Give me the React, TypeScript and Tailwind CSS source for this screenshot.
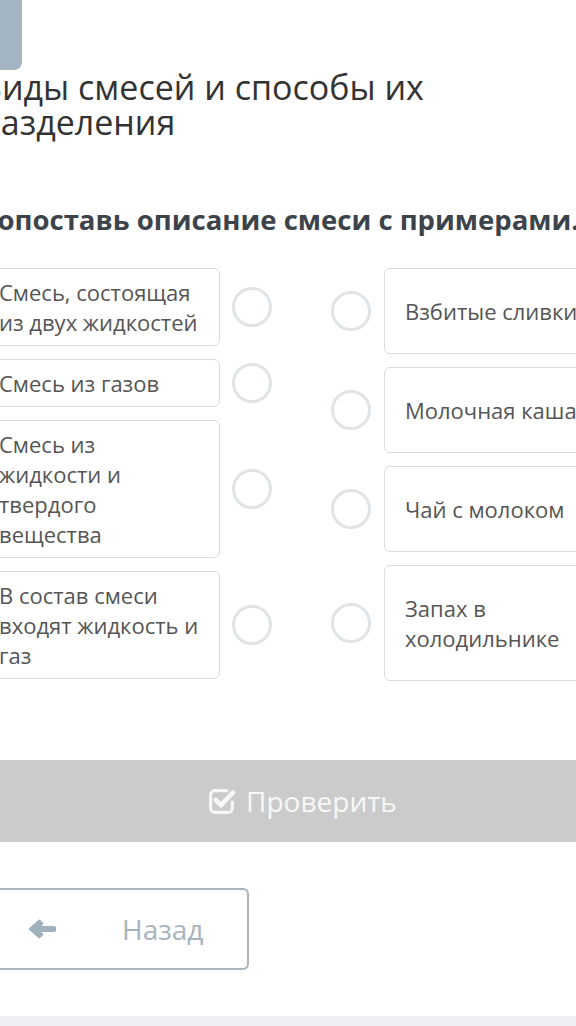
const leftItems = [
  "Смесь, состоящая\nиз двух жидкостей",
  "Смесь из газов",
  "Смесь из\nжидкости и\nтвердого\nвещества",
  "В состав смеси\nвходят жидкость и\nгаз",
];

const rightItems = ["Взбитые сливки", "Молочная каша", "Чай с молоком", "Запах в\nхолодильнике"];

function Dot() {
  return <span className="size-10 shrink-0 rounded-full border-[3px] border-[#e1e4e6] bg-white" />;
}

function CheckIcon() {
  return (
    <svg viewBox="0 0 28 28" className="size-[29px]" fill="none">
      <path
        d="M19 3.5H7.5a4 4 0 0 0-4 4v13a4 4 0 0 0 4 4h13a4 4 0 0 0 4-4v-6"
        stroke="currentColor"
        strokeWidth="3"
        strokeLinecap="round"
      />
      <path
        d="M8.5 12.5l5 5L25 5.5"
        stroke="currentColor"
        strokeWidth="4.6"
        strokeLinecap="round"
        strokeLinejoin="round"
      />
    </svg>
  );
}

function ArrowIcon() {
  return (
    <svg viewBox="0 0 26 18" className="h-[20px] w-[28px]" fill="currentColor">
      <path
        d="M10.5 1L1.5 9l9 8 3-3-3-3H23.5a2 2 0 0 0 0-4H10.5l3-3z"
        stroke="currentColor"
        strokeWidth="1.6"
        strokeLinejoin="round"
      />
    </svg>
  );
}

export default function App() {
  return (
    <div className="min-h-[1026px] w-[576px] overflow-hidden bg-white font-['Open_Sans',sans-serif]">
      <div className="-ml-5 w-[644px]">
        <div className="h-[70px] w-[42px] rounded-b-lg bg-[#a3b5c2]" />

        <h1 className="text-[34px] leading-[35px] font-normal text-[#333]">
          Виды смесей и способы их
          <br />
          разделения
        </h1>

        <h2 className="mt-16 text-[27.5px] leading-8 font-bold whitespace-nowrap text-[#3d434a]">
          Сопоставь описание смеси с примерами.
        </h2>

        <div className="mt-8 flex justify-between">
          <div className="flex w-[292px] flex-col gap-[13px]">
            {leftItems.map((item) => (
              <div key={item} className="flex items-center gap-3">
                <div className="w-[241px] rounded-md border border-[#dcdcdc] py-2 pr-2 pl-[18px] text-[22px] leading-[30px] whitespace-pre-line text-[#555]">
                  {item}
                </div>
                <Dot />
              </div>
            ))}
          </div>

          <div className="flex w-[293px] flex-col gap-[13px]">
            {rightItems.map((item) => (
              <div key={item} className="flex items-center gap-[13px]">
                <Dot />
                <div className="w-[240px] rounded-md border border-[#dcdcdc] py-[27px] pr-2 pl-5 text-[22px] leading-[30px] whitespace-pre-line text-[#555]">
                  {item}
                </div>
              </div>
            ))}
          </div>
        </div>

        <button
          type="button"
          className="mt-[79px] flex h-[82px] w-full items-center justify-center gap-[10px] bg-[#cbcbcb] text-[28px] text-[#f7f7f7]"
        >
          <CheckIcon />
          Проверить
        </button>

        <button
          type="button"
          className="mt-[46px] flex h-[82px] w-[269px] items-center rounded-md border-2 border-[#a9b4bb] text-[28px] text-[#a6b4bd]"
        >
          <span className="flex w-[120px] justify-center text-[#9fb1bd]">
            <ArrowIcon />
          </span>
          <span className="ml-5">Назад</span>
        </button>
      </div>

      <div className="mt-[46px] h-[20px] bg-[#eef0f3]" />
    </div>
  );
}
